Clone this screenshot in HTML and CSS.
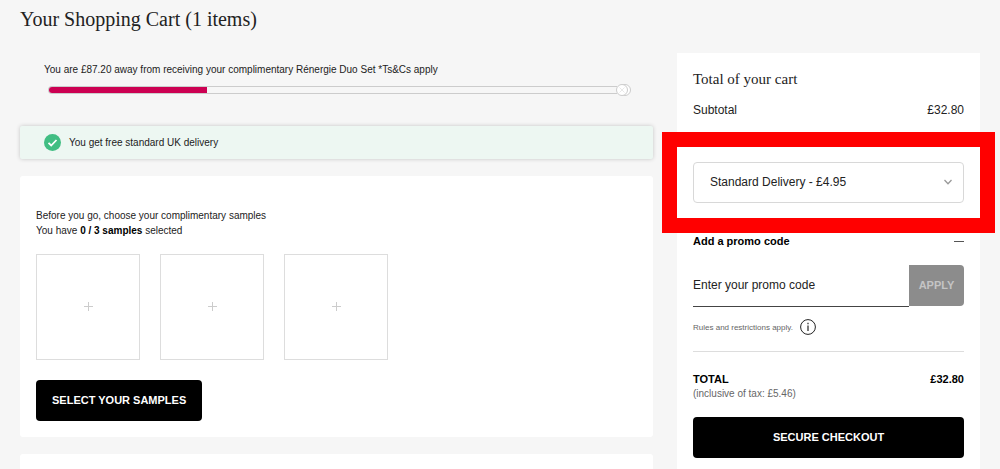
FILE: index.html
```html
<!DOCTYPE html>
<html lang="en">
<head>
    <meta charset="utf-8">
    <title>Your Shopping Cart</title>
    <link rel="stylesheet" href="styles.css">
</head>
<body>
    <main class="page">
        <h1>Your Shopping Cart (1 items)</h1>

        <div class="cart">
            <div class="cart-main">
                <section class="gift">
                    <p>You are £87.20 away from receiving your complimentary Rénergie Duo Set *Ts&amp;Cs apply</p>
                    <div class="progress">
                        <div class="progress-track">
                            <div class="progress-fill"></div>
                        </div>
                        <svg class="progress-end" width="18" height="14" viewBox="0 0 18 14" fill="#fff" stroke="#ccc">
                            <circle cx="10" cy="7" r="5.5"/>
                            <circle cx="7" cy="7" r="5.5"/>
                            <path d="M4.5 4.5l5 5M9.5 4.5l-5 5" stroke="#e8e8e8"/>
                        </svg>
                    </div>
                </section>

                <div class="message">
                    <svg width="17" height="17" viewBox="0 0 17 17" fill="none">
                        <circle cx="8.5" cy="8.5" r="8.5" fill="#41be83"/>
                        <path d="M4.5 8.8l2.7 2.7 5.3-5.5" stroke="#fff" stroke-width="1.8"/>
                    </svg>
                    <span>You get free standard UK delivery</span>
                </div>

                <section class="samples">
                    <p>Before you go, choose your complimentary samples</p>
                    <p>You have <strong>0 / 3 samples</strong> selected</p>
                    <div class="sample-list">
                        <button class="sample" aria-label="Add sample 1"><svg width="9" height="9" viewBox="0 0 9 9"><path d="M4.5 0v9M0 4.5h9"/></svg></button>
                        <button class="sample" aria-label="Add sample 2"><svg width="9" height="9" viewBox="0 0 9 9"><path d="M4.5 0v9M0 4.5h9"/></svg></button>
                        <button class="sample" aria-label="Add sample 3"><svg width="9" height="9" viewBox="0 0 9 9"><path d="M4.5 0v9M0 4.5h9"/></svg></button>
                    </div>
                    <button class="btn">SELECT YOUR SAMPLES</button>
                </section>

                <section class="products"></section>
            </div>

            <aside class="summary">
                <h2>Total of your cart</h2>
                <div class="row subtotal"><span>Subtotal</span><span>£32.80</span></div>

                <div class="delivery">
                    <select class="delivery-select" aria-label="Delivery method">
                        <option>Standard Delivery - £4.95</option>
                    </select>
                    <svg class="chevron" width="8" height="6" viewBox="0 0 8 6" fill="none" stroke="#999" stroke-width="1.3"><path d="M.5 1L4 4.7 7.5 1"/></svg>
                </div>

                <button class="row promo-toggle">
                    <span>Add a promo code</span>
                    <svg width="10" height="1" viewBox="0 0 10 1"><path d="M0 0h10v1H0z" fill="#555"/></svg>
                </button>
                <form class="promo">
                    <input type="text" placeholder="Enter your promo code" aria-label="Enter your promo code">
                    <button type="button" disabled>APPLY</button>
                </form>
                <div class="rules">
                    <span>Rules and restrictions apply.</span>
                    <svg width="16" height="16" viewBox="0 0 16 16" fill="none" stroke="#222">
                        <circle cx="8" cy="8" r="7.4"/>
                        <path d="M8 6.5V12M8 3.8V5.2" stroke-width="1.2"/>
                    </svg>
                </div>

                <div class="row total"><span>TOTAL</span><span>£32.80</span></div>
                <p class="tax">(inclusive of tax: £5.46)</p>
                <button class="btn checkout">SECURE CHECKOUT</button>
            </aside>
        </div>
    </main>
</body>
</html>
```

FILE: styles.css
```css
* { box-sizing: border-box; }
body { margin: 0; background: #f6f6f6; color: #222; font: 10px/15px "Liberation Sans", Arial, sans-serif; }
h1, h2, p { margin: 0; }
h1, h2 { font-family: "Liberation Serif", "Times New Roman", serif; font-weight: normal; }
button, input, select { font: inherit; color: inherit; margin: 0; }
button { cursor: pointer; }

.page { min-height: 100vh; padding: 0 20px; display: flex; flex-direction: column; }
h1 { font-size: 20px; line-height: 24px; padding: 7px 0 22px; }
.cart { flex: 1; display: grid; grid-template-columns: 1fr 303px; gap: 24px; }
.cart-main { display: flex; flex-direction: column; }

.gift { padding: 9px 20px 29px 24px; }
.progress { display: flex; align-items: center; height: 14px; margin-top: 6px; padding-left: 4px; }
.progress-track { flex: 1; height: 8px; border: 1px solid #ccc; border-right: 0; border-radius: 4px 0 0 4px; }
.progress-fill { width: 158px; height: 6px; background: #cc0052; border-radius: 3px 0 0 3px; }
.progress-end { margin-left: -2px; }

.message { display: flex; align-items: center; gap: 8px; height: 33px; padding: 0 24px; background: #edf7f2; border-radius: 2px; box-shadow: 0 0 4px rgba(0,0,0,0.2); }

.samples { margin: 17px 0; padding: 32px 16px 16px; background: #fff; border-radius: 3px; }
.samples strong { color: #000; }
.sample-list { display: flex; gap: 20px; margin: 16px 0 20px; }
.sample { width: 104px; height: 106px; padding: 0; background: #fff; border: 1px solid #ddd; }
.sample svg { stroke: #ccc; }
.products { flex: 1; background: #fff; border-radius: 3px 3px 0 0; }

.btn { height: 41px; padding: 0 16px; background: #000; color: #fff; border: 0; border-radius: 4px; font-size: 11px; font-weight: bold; }

.summary { padding: 16px 16px 12px; background: #fff; font-size: 12px; }
h2 { font-size: 15px; line-height: 20px; }
.row { display: flex; justify-content: space-between; align-items: center; }
.subtotal { margin-top: 14px; }

/* delivery choice, highlighted */
.delivery { position: relative; margin: 29px -16px 0; padding: 15px 16px; outline: 15px solid #f00; }
.delivery-select { display: block; width: 100%; height: 41px; padding: 0 16px; appearance: none; background: #fff; border: 1px solid #d8d8d8; border-radius: 4px; }
.chevron { position: absolute; right: 28px; top: 32px; pointer-events: none; }

.promo-toggle { width: 100%; margin-top: 16px; padding: 0; background: none; border: 0; color: #000; font-size: 11px; font-weight: bold; }
.promo { display: flex; margin-top: 16px; height: 42px; }
.promo input { flex: 1; min-width: 0; padding: 0; background: none; border: 0; border-bottom: 1px solid #444; }
.promo input::placeholder { color: #222; opacity: 1; }
.promo button { width: 55px; height: 41px; padding: 0; background: #8c8c8c; color: #c4c4c4; border: 0; border-radius: 0 4px 4px 0; font-size: 11px; font-weight: bold; }
.rules { display: flex; align-items: center; gap: 7px; height: 16px; margin-top: 12px; color: #666; font-size: 8px; }
.total { margin-top: 16px; padding-top: 20px; border-top: 1px solid #ddd; color: #000; font-size: 11px; font-weight: bold; }
.tax { color: #666; font-size: 10px; line-height: 14px; }
.checkout { width: 100%; margin-top: 16px; }
```
